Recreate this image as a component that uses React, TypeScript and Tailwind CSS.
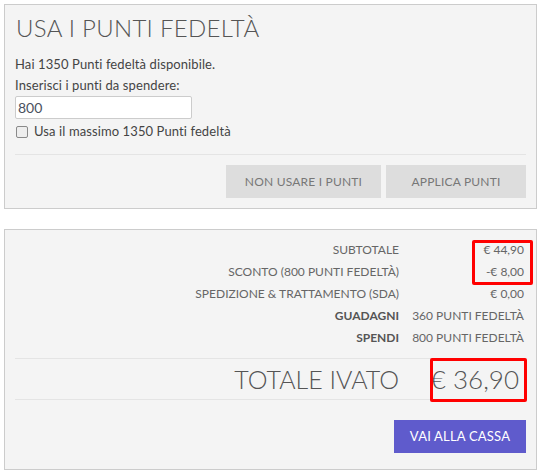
import React from "react";

const font = { fontFamily: "Lato, 'Open Sans', sans-serif" };

export default function App() {
  return (
    <div className="w-[541px] h-[474px] bg-white pt-[4px] px-[4px] text-[#555]" style={font}>
      {/* Panel 1 */}
      <div className="border border-[#cccccc] bg-[#f4f4f4] px-[10px] pt-[7px] pb-[10px]">
        <h2 className="text-[24px] leading-[32px] font-light text-[#555] tracking-[0.3px] pl-[1px]">
          USA I PUNTI FEDELTÀ
        </h2>
        <div className="mt-[10px] text-[13px] leading-[21px] text-[#444] tracking-[0.1px]">
          <div>Hai 1350 Punti fedeltà disponibile.</div>
          <div>Inserisci i punti da spendere:</div>
        </div>
        <div className="w-[177px] h-[23px] border border-[#cccccc] rounded-[2px] bg-white px-[2px] text-[14px] leading-[21px] text-[#4a5160]">
          800
        </div>
        <label className="flex items-center gap-[6px] h-[26px] text-[13px] text-[#444] tracking-[0.1px]">
          <span className="ml-[1px] w-[12px] h-[12px] border border-[#8a8a8a] rounded-[2px] bg-[#eeeeee]" />
          <span>Usa il massimo 1350 Punti fedeltà</span>
        </label>
        <div className="mt-[9px] border-t border-[#e4e4e4]" />
        <div className="mt-[10px] flex justify-end gap-[5px]">
          <button className="w-[155px] h-[33px] bg-[#dddddd] text-[#777] text-[12px] tracking-[0.2px]">
            NON USARE I PUNTI
          </button>
          <button className="w-[140px] h-[33px] bg-[#dddddd] text-[#777] text-[12px] tracking-[0.2px]">
            APPLICA PUNTI
          </button>
        </div>
      </div>

      {/* Panel 2 */}
      <div className="relative mt-[20px] border border-[#cccccc] bg-[#f4f4f4] px-[10px] pt-[9px] pb-[16px]">
        <div className="grid grid-cols-[1fr_127px] text-[12px] leading-[22px] text-[#666]">
          <div className="text-right">SUBTOTALE</div>
          <div className="text-right pr-[2px]">€ 44,90</div>
          <div className="text-right">SCONTO (800 PUNTI FEDELTÀ)</div>
          <div className="text-right pr-[2px]">-€ 8,00</div>
          <div className="text-right">SPEDIZIONE &amp; TRATTAMENTO (SDA)</div>
          <div className="text-right pr-[2px]">€ 0,00</div>
          <div className="text-right font-bold text-[#555]">GUADAGNI</div>
          <div className="text-right pr-[2px]">360 PUNTI FEDELTÀ</div>
          <div className="text-right font-bold text-[#555]">SPENDI</div>
          <div className="text-right pr-[2px]">800 PUNTI FEDELTÀ</div>
        </div>
        <div className="mt-[9px] border-t border-[#e4e4e4]" />
        <div className="grid grid-cols-[1fr_127px] h-[40px] items-center text-[#555] font-light">
          <div className="text-right text-[25px] leading-[40px]">TOTALE IVATO</div>
          <div className="text-right text-[26px] leading-[40px] pr-[7px]">€ 36,90</div>
        </div>
        <div className="border-t border-[#e4e4e4]" />
        <div className="mt-[20px] flex justify-end">
          <button className="w-[132px] h-[33px] bg-[#5f5bcc] text-white text-[13px] tracking-[0.2px]">
            VAI ALLA CASSA
          </button>
        </div>

        {/* annotations */}
        <div className="absolute left-[467px] top-[10px] w-[61px] h-[45px] border-[3px] border-[#ff0000] rounded-[2px]" />
        <div className="absolute left-[425px] top-[128px] w-[97px] h-[44px] border-[3px] border-[#ff0000] rounded-[2px]" />
      </div>
    </div>
  );
}
